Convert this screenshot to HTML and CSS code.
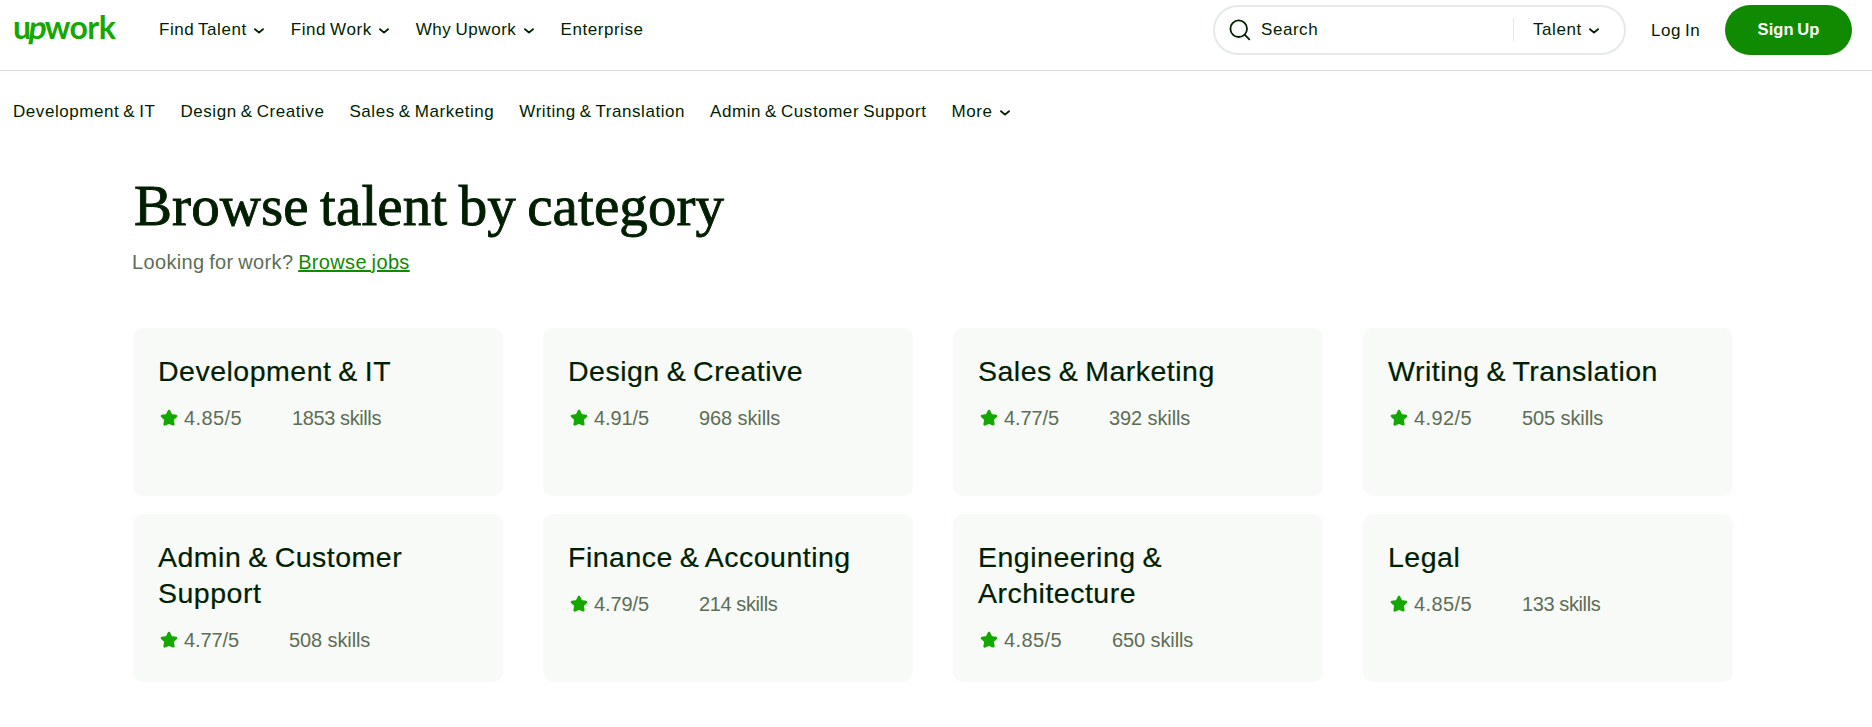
FILE: index.html
```html
<!DOCTYPE html>
<html lang="en">
<head>
  <meta charset="UTF-8" />
  <meta name="viewport" content="width=device-width, initial-scale=1" />
  <title>Browse talent by category</title>
  <link rel="stylesheet" href="styles.css">
</head>
<body>
  <svg class="sprite">
    <symbol id="chevron" viewBox="0 0 10 6"><path d="M1 1.2 L5 4.6 L9 1.2" /></symbol>
    <symbol id="star" viewBox="0 0 18 18"><path d="M9 2 L11.1 6.3 L16 7 L12.5 10.4 L13.3 15.3 L9 13.6 L4.7 15.3 L5.5 10.4 L2 7 L6.9 6.3 Z" /></symbol>
  </svg>

  <header class="header">
    <a class="logo"><span class="logo-u">u</span><span class="logo-p">p</span>work</a>
    <nav class="main-nav">
      <a>Find Talent <svg class="chevron"><use href="#chevron" /></svg></a>
      <a>Find Work <svg class="chevron"><use href="#chevron" /></svg></a>
      <a>Why Upwork <svg class="chevron"><use href="#chevron" /></svg></a>
      <a>Enterprise</a>
    </nav>
    <div class="search">
      <svg class="search-icon" viewBox="0 0 22 22"><circle cx="9.7" cy="9.7" r="8.3" /><path d="M15.6 15.6 L20.8 20.8" /></svg>
      <span class="search-text">Search</span>
      <a class="search-type">Talent <svg class="chevron"><use href="#chevron" /></svg></a>
    </div>
    <a class="login">Log In</a>
    <a class="signup">Sign Up</a>
  </header>

  <nav class="sub-nav">
    <a>Development &amp; IT</a>
    <a>Design &amp; Creative</a>
    <a>Sales &amp; Marketing</a>
    <a>Writing &amp; Translation</a>
    <a>Admin &amp; Customer Support</a>
    <a>More <svg class="chevron"><use href="#chevron" /></svg></a>
  </nav>

  <main class="content">
    <h1>Browse talent by category</h1>
    <p class="jobs">Looking for work? <a>Browse jobs</a></p>
    <div class="grid">
      <div class="card">
        <h2>Development &amp; IT</h2>
        <div class="stats"><svg class="star"><use href="#star" /></svg><span class="rating wide">4.85/5</span><span class="tight">1853 skills</span></div>
      </div>
      <div class="card">
        <h2>Design &amp; Creative</h2>
        <div class="stats"><svg class="star"><use href="#star" /></svg><span class="rating">4.91/5</span><span>968 skills</span></div>
      </div>
      <div class="card">
        <h2>Sales &amp; Marketing</h2>
        <div class="stats"><svg class="star"><use href="#star" /></svg><span class="rating">4.77/5</span><span>392 skills</span></div>
      </div>
      <div class="card">
        <h2>Writing &amp; Translation</h2>
        <div class="stats"><svg class="star"><use href="#star" /></svg><span class="rating wide">4.92/5</span><span>505 skills</span></div>
      </div>
      <div class="card">
        <h2>Admin &amp; Customer Support</h2>
        <div class="stats"><svg class="star"><use href="#star" /></svg><span class="rating">4.77/5</span><span>508 skills</span></div>
      </div>
      <div class="card">
        <h2>Finance &amp; Accounting</h2>
        <div class="stats"><svg class="star"><use href="#star" /></svg><span class="rating">4.79/5</span><span class="tight">214 skills</span></div>
      </div>
      <div class="card">
        <h2>Engineering &amp; Architecture</h2>
        <div class="stats"><svg class="star"><use href="#star" /></svg><span class="rating wide">4.85/5</span><span>650 skills</span></div>
      </div>
      <div class="card">
        <h2>Legal</h2>
        <div class="stats"><svg class="star"><use href="#star" /></svg><span class="rating wide">4.85/5</span><span class="tight">133 skills</span></div>
      </div>
    </div>
  </main>
</body>
</html>
```
FILE: styles.css
```css
* {
  box-sizing: border-box;
}

body {
  margin: 0;
  background: #fff;
  color: #001e00;
  font-family: "Liberation Sans", Arial, sans-serif;
  font-size: 17px;
  line-height: 24px;
  letter-spacing: 0.55px;
  word-spacing: -1.2px;
  overflow: hidden;
}

.sprite {
  display: none;
}

.header {
  display: flex;
  align-items: flex-start;
  height: 71px;
  padding: 5px 20px 0 13px;
  border-bottom: 1px solid #d5e0d5;
  white-space: nowrap;
}

.logo {
  width: 146px;
  padding-top: 2px;
  color: #14a800;
  font-family: Lato, sans-serif;
  font-size: 32px;
  font-weight: 700;
  line-height: 40px;
  letter-spacing: -0.6px;
}

.logo-u {
  letter-spacing: -2.5px;
}

.logo-p {
  display: inline-block;
  letter-spacing: -2px;
  transform: skewX(-8deg);
}

.main-nav {
  display: flex;
  gap: 27px;
  padding-top: 12.5px;
}

.chevron {
  width: 10px;
  height: 6px;
  margin-left: 3px;
  vertical-align: 1px;
  fill: none;
  stroke: #001e00;
  stroke-width: 1.8;
  stroke-linecap: round;
  stroke-linejoin: round;
}

.search {
  display: flex;
  align-items: center;
  width: 413px;
  height: 50px;
  margin-left: auto;
  padding-left: 14px;
  border: 2px solid #e4ebe4;
  border-radius: 25px;
}

.search-icon {
  width: 22px;
  height: 22px;
  fill: none;
  stroke: #001e00;
  stroke-width: 1.8;
}

.search-text {
  width: 252px;
  margin-left: 10px;
}

.search-type {
  height: 24px;
  padding-left: 19px;
  border-left: 1px solid #e4ebe4;
}

.login {
  width: 74px;
  margin-left: 25px;
  padding-top: 14px;
}

.signup {
  width: 127px;
  height: 50px;
  border-radius: 25px;
  background: #108a00;
  color: #fff;
  font-size: 16.5px;
  font-weight: 700;
  line-height: 48px;
  letter-spacing: 0.1px;
  text-align: center;
}

.sub-nav {
  display: flex;
  gap: 25px;
  padding: 29px 13px 0;
}

.content {
  width: 1600px;
  margin-left: 133px;
}

h1 {
  margin: 46px 0 0 1px;
  font-family: "Liberation Serif", "Times New Roman", serif;
  font-size: 57px;
  font-weight: 400;
  line-height: 72px;
  letter-spacing: 0.1px;
  word-spacing: -3px;
  -webkit-text-stroke: 0.9px #001e00;
}

.jobs {
  margin: 6px 0 0 -1px;
  color: #5e6d55;
  font-size: 20px;
  line-height: 28px;
  letter-spacing: 0.35px;
}

.jobs a {
  color: #108a00;
  text-decoration: underline;
  text-decoration-thickness: 2px;
}

.grid {
  display: grid;
  grid-template-columns: repeat(4, 370px);
  grid-auto-rows: 167.5px;
  gap: 18.5px 40px;
  margin-top: 52px;
}

.card {
  padding: 25px;
  border-radius: 10px;
  background: #f7faf7;
}

h2 {
  margin: 0 0 15px;
  font-size: 28.5px;
  font-weight: 400;
  line-height: 36px;
  letter-spacing: 0.5px;
  word-spacing: -1.5px;
  -webkit-text-stroke: 0.2px #001e00;
}

.stats {
  display: flex;
  color: #5e6d55;
  font-size: 20px;
  line-height: 28px;
  letter-spacing: -0.1px;
  word-spacing: 0;
}

.star {
  width: 18px;
  height: 18px;
  margin: 5px 6px 0 2px;
  fill: #14a800;
  stroke: #14a800;
  stroke-width: 2.6;
  stroke-linejoin: round;
}

.rating {
  margin-right: 50px;
}

.wide {
  letter-spacing: 0.4px;
}

.tight {
  letter-spacing: -0.4px;
}
```
